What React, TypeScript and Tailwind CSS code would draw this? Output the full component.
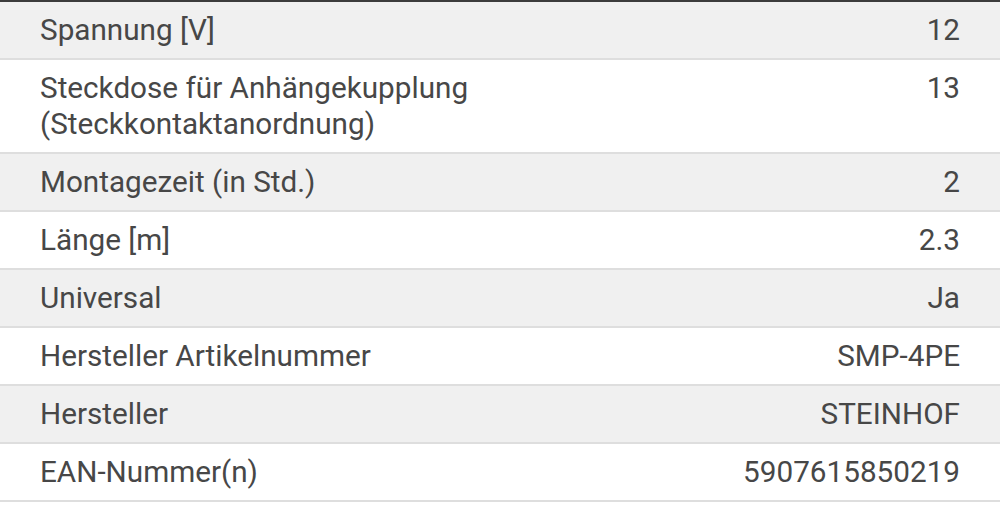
const rows: [string, string][] = [
    ["Spannung [V]", "12"],
    ["Steckdose für Anhängekupplung (Steckkontaktanordnung)", "13"],
    ["Montagezeit (in Std.)", "2"],
    ["Länge [m]", "2.3"],
    ["Universal", "Ja"],
    ["Hersteller Artikelnummer", "SMP-4PE"],
    ["Hersteller", "STEINHOF"],
    ["EAN-Nummer(n)", "5907615850219"],
];

export default function App() {
    return (
        <div className="w-[1000px] h-[513px] bg-white overflow-hidden font-['Roboto',sans-serif] text-[29.7px] leading-[36px] text-[#474747]">
            <div className="border-t-2 border-[#3c3c3c]">
                {rows.map(([label, value], i) => (
                    <div
                        key={label}
                        className={`flex justify-between px-10 pt-[10px] pb-[10px] border-b-2 border-[#dedede] ${i % 2 === 0 ? "bg-[#f0f0f0]" : "bg-white"}`}
                    >
                        <div className="w-[500px]">{label}</div>
                        <div className="text-right">{value}</div>
                    </div>
                ))}
            </div>
        </div>
    );
}
